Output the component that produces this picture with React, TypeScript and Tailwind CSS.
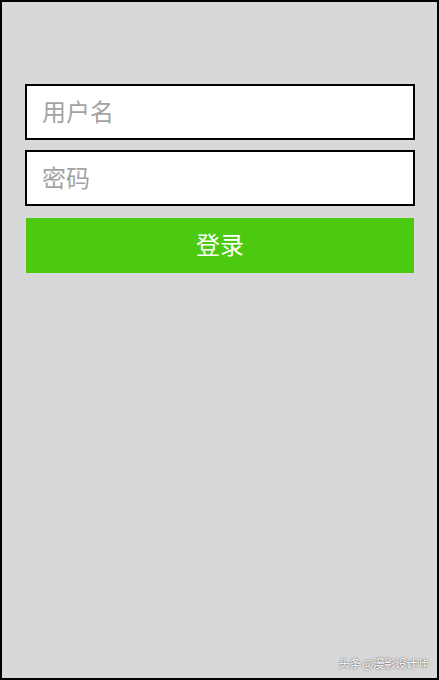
export default function App() {
  return (
    <div
      className="relative w-[439px] h-[680px] border-2 border-black bg-[#d8d8d8] box-border"
      style={{ fontFamily: '"Noto Sans CJK SC", "Noto Sans", sans-serif' }}
    >
      <div className="flex flex-col pl-[23px] pr-[22px] pt-[82px]">
        <div className="h-[56px] border-2 border-black bg-white flex items-center pl-[15px] pb-[3px] text-[24px] text-[#a3a3a3]">
          用户名
        </div>
        <div className="mt-[10px] h-[56px] border-2 border-black bg-white flex items-center pl-[15px] pb-[3px] text-[24px] text-[#a3a3a3]">
          密码
        </div>
        <button className="mt-[12px] mx-[1px] h-[55px] pb-[3px] bg-[#4cca12] text-white text-[24px] flex items-center justify-center">
          登录
        </button>
      </div>
      <div
        className="absolute right-[9px] bottom-[9px] text-[11.5px] text-white leading-none tracking-[-0.5px]"
        style={{ textShadow: '0 0 2px rgba(0,0,0,0.8)' }}
      >
        头条 @漫影设计咔
      </div>
    </div>
  );
}
